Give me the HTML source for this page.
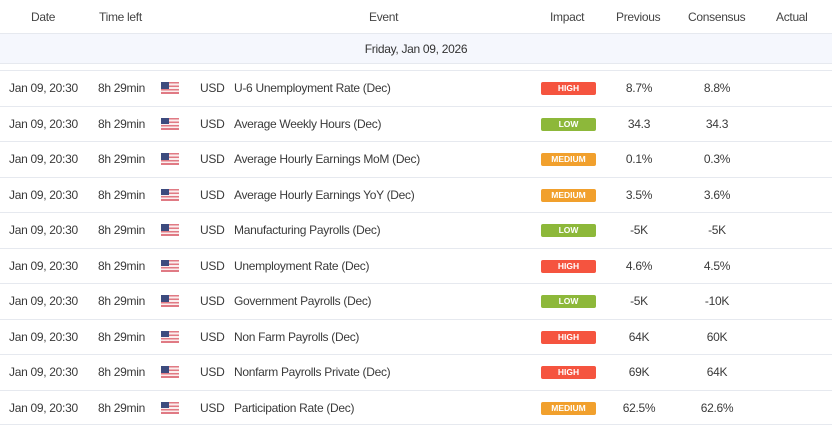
<!DOCTYPE html>
<html><head><style>
body{margin:0;width:832px;height:427px;background:#fff;font-family:"Liberation Sans",Arial,sans-serif;font-size:12px;letter-spacing:-0.3px;color:#3a3a3a;position:relative;overflow:hidden}
.h{position:absolute;top:0;height:33px;line-height:34px;color:#444;font-size:12px}
.band{position:absolute;left:0;top:33px;width:832px;height:31px;background:#f5f7fd;border-top:1px solid #e6e9ef;border-bottom:1px solid #e6e9ef;text-align:center;line-height:30px;color:#333;font-size:12px}
.band,.row{box-sizing:border-box}
.row{position:absolute;left:0;width:832px;height:35.5px;border-top:1px solid #e6e9ef}
.row span{position:absolute;top:0;line-height:34px}
.b{position:absolute;left:541px;top:11px;width:55px;height:13px;border-radius:2px;color:#fff;font-size:8.5px;letter-spacing:0;font-weight:bold;text-align:center;line-height:13px}
.H{background:#f5543f}.L{background:#8db83a}.M{background:#f1a02d}
.flag{position:absolute;left:161px;top:11px;width:18px;height:12px;background:repeating-linear-gradient(#e07a84 0 1.7px,#fbeeee 1.7px 3.4px)}
.flag:before{content:"";position:absolute;left:0;top:0;width:8px;height:6.8px;background:#3d4b7e}
.c{text-align:center}
</style></head><body>
<div class="h" style="left:31px">Date</div>
<div class="h" style="left:99px">Time left</div>
<div class="h" style="left:369px">Event</div>
<div class="h" style="left:550px">Impact</div>
<div class="h" style="left:616px">Previous</div>
<div class="h" style="left:688px">Consensus</div>
<div class="h" style="left:776px">Actual</div>
<div class="band">Friday, Jan 09, 2026</div>
<div id="rows"></div>
<script>
var d=[["U-6 Unemployment Rate (Dec)","H","HIGH","8.7%","8.8%"],["Average Weekly Hours (Dec)","L","LOW","34.3","34.3"],["Average Hourly Earnings MoM (Dec)","M","MEDIUM","0.1%","0.3%"],["Average Hourly Earnings YoY (Dec)","M","MEDIUM","3.5%","3.6%"],["Manufacturing Payrolls (Dec)","L","LOW","-5K","-5K"],["Unemployment Rate (Dec)","H","HIGH","4.6%","4.5%"],["Government Payrolls (Dec)","L","LOW","-5K","-10K"],["Non Farm Payrolls (Dec)","H","HIGH","64K","60K"],["Nonfarm Payrolls Private (Dec)","H","HIGH","69K","64K"],["Participation Rate (Dec)","M","MEDIUM","62.5%","62.6%"]];
var h="";d.forEach(function(r,i){var t=70+i*35.5;
h+='<div class="row" style="top:'+t+'px'+(i==9?';border-bottom:1px solid #e6e9ef':'')+'"><span style="left:9px">Jan 09, 20:30</span><span style="left:98px">8h 29min</span><div class="flag"></div><span style="left:200px">USD</span><span style="left:234px">'+r[0]+'</span><div class="b '+r[1]+'">'+r[2]+'</div><span class="c" style="left:600px;width:78px">'+r[3]+'</span><span class="c" style="left:677px;width:80px">'+r[4]+'</span></div>';});
document.getElementById("rows").innerHTML=h;
</script>
</body></html>
